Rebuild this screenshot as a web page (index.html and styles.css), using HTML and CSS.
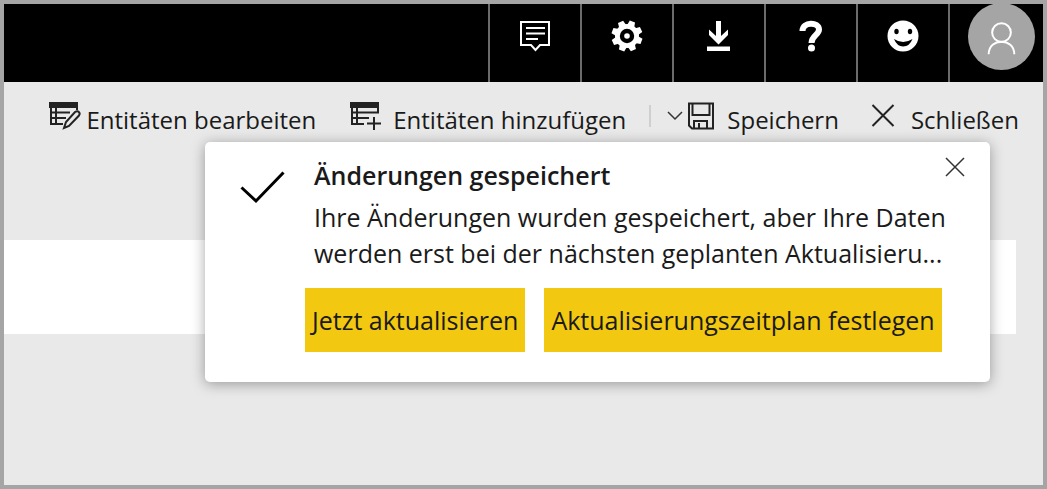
FILE: index.html
```html
<!DOCTYPE html>
<html lang="de">
<head>
<meta charset="utf-8">
<meta name="viewport" content="width=device-width, initial-scale=1">
<title>Entitäten</title>
<link rel="stylesheet" href="styles.css">
</head>
<body>
<div class="app">
  <header class="topbar">
    <button class="topbar-button" type="button" aria-label="Kommentare">
      <svg width="32" height="32" viewBox="0 0 32 32" fill="none" stroke="#fff" stroke-width="2">
        <path d="M2 2H30V25H21L16.500 30L12 25H2Z"/>
        <path d="M7 8H26M7 13.500H26M7 19H19"/>
      </svg>
    </button>
    <button class="topbar-button" type="button" aria-label="Einstellungen">
      <svg width="32" height="32" viewBox="-16 -16 32 32" fill="#fff">
        <g transform="rotate(-2)">
          <g id="teeth">
            <path id="tooth" d="M-3.800-10L-2.800-15.500H2.800L3.800-10L2.800 0H-2.800Z" transform="rotate(22.500)"/>
            <use href="#tooth" transform="rotate(45)"/>
            <use href="#tooth" transform="rotate(90)"/>
            <use href="#tooth" transform="rotate(135)"/>
          </g>
          <use href="#teeth" transform="rotate(180)"/>
        </g>
        <circle r="12"/>
        <circle r="7.200" fill="#000"/>
        <circle r="2.800"/>
      </svg>
    </button>
    <button class="topbar-button" type="button" aria-label="Herunterladen">
      <svg width="32" height="32" viewBox="0 0 32 32" fill="#fff">
        <path d="M13 1H18V16L25 9.500V15L15.500 24.500L6 15V9.500L13 16ZM4 26.500H27V31H4Z"/>
      </svg>
    </button>
    <button class="topbar-button" type="button" aria-label="Hilfe">
      <svg width="32" height="32" viewBox="0 0 32 32" fill="none" stroke="#fff">
        <path d="M7.500 11C7.500 1.500 24 1.500 24 9.500C24 15 16.500 15.500 16.500 23" stroke-width="6"/>
        <circle cx="16.500" cy="28" r="3.500" fill="#fff" stroke="none"/>
      </svg>
    </button>
    <button class="topbar-button" type="button" aria-label="Feedback">
      <svg width="32" height="32" viewBox="0 0 32 32">
        <circle cx="16" cy="16" r="15.500" fill="#fff"/>
        <ellipse cx="9.500" cy="11.500" rx="2.200" ry="2.800"/>
        <ellipse cx="23" cy="11.500" rx="2.200" ry="2.800"/>
        <path d="M7 19Q16 25 25.500 19Q22.500 26.500 16.200 26.500Q10 26.500 7 19Z"/>
      </svg>
    </button>
    <button class="topbar-button topbar-account" type="button" aria-label="Konto">
      <svg width="67" height="67" viewBox="0 0 68 68" fill="none" stroke="#fff" stroke-width="2">
        <circle cx="34" cy="34" r="34" fill="#a5a5a5" stroke="none"/>
        <circle cx="34" cy="30" r="9.500"/>
        <path d="M21 52C21 35 47 35 47 52"/>
      </svg>
    </button>
  </header>

  <nav class="toolbar" aria-label="Entitäten">
    <button class="tool tool-edit" type="button">
      <svg width="32" height="28" viewBox="0 0 32 28" fill="none" stroke="#222" stroke-width="2">
        <path d="M1 1H28V5H1Z" fill="#222"/>
        <path d="M2 2V22H14M7 5V22M2 10.500H21M2 16H17M28 2V8"/>
        <path d="M15 26L17 20L26 10Q29 8 30.500 11Q31 12 30 13.500L20 24Z"/>
      </svg>
      <span>Entitäten bearbeiten</span>
    </button>
    <button class="tool tool-add" type="button">
      <svg width="32" height="28" viewBox="0 0 32 28" fill="none" stroke="#222" stroke-width="2">
        <path d="M1 1H28V5H1Z" fill="#222"/>
        <path d="M2 2V22H14M7 5V22M2 10.500H28V2M2 16H19M24 15V28M17 21.500H31"/>
      </svg>
      <span>Entitäten hinzufügen</span>
    </button>
    <span class="divider"></span>
    <button class="tool tool-save" type="button">
      <svg width="16" height="28" viewBox="0 0 16 28" fill="none" stroke="#333" stroke-width="1.500">
        <path d="M1 10L8 17L15 10"/>
      </svg>
      <svg class="disk" width="28" height="28" viewBox="0 0 28 28" fill="none" stroke="#222" stroke-width="2">
        <path d="M2 1.500H26V26.500H5L2 23.500ZM5.500 2V13H22.500V2M7 26V19H20V26M12 21V26"/>
      </svg>
      <span>Speichern</span>
    </button>
    <button class="tool tool-close" type="button">
      <svg width="24" height="28" viewBox="0 0 24 28" fill="none" stroke="#222" stroke-width="2">
        <path d="M1.500 3L22.500 24M22.500 3L1.500 24"/>
      </svg>
      <span>Schließen</span>
    </button>
  </nav>

  <main class="content">
    <div class="row"></div>
  </main>

  <section class="notice" role="dialog" aria-labelledby="notice-title">
    <svg class="notice-check" width="46" height="34" viewBox="0 0 46 34" fill="none" stroke="#000" stroke-width="3">
      <path d="M1.500 17.500L16 31L43.500 2.500"/>
    </svg>
    <div class="notice-body">
      <h2 class="notice-title" id="notice-title">Änderungen gespeichert</h2>
      <p class="notice-text">Ihre Änderungen wurden gespeichert, aber Ihre Daten werden erst bei der nächsten geplanten Aktualisieru...</p>
      <div class="notice-actions">
        <button class="action" type="button">Jetzt aktualisieren</button>
        <button class="action" type="button">Aktualisierungszeitplan festlegen</button>
      </div>
    </div>
    <button class="notice-close" type="button" aria-label="Meldung schließen">
      <svg width="20" height="20" viewBox="0 0 20 20" fill="none" stroke="#333" stroke-width="1.500">
        <path d="M1 1L19 19M19 1L1 19"/>
      </svg>
    </button>
  </section>
</div>
</body>
</html>
```
FILE: styles.css
```css
* {
  box-sizing: border-box;
}

body {
  margin: 0;
  font-family: "Open Sans", "Noto Sans", sans-serif;
  font-size: 24px;
  color: #1a1a1a;
}

button {
  margin: 0;
  padding: 0;
  border: 0;
  background: none;
  font: inherit;
  color: inherit;
  white-space: nowrap;
  cursor: pointer;
}

svg {
  display: block;
  flex: none;
}

.app {
  position: relative;
  display: flex;
  flex-direction: column;
  min-height: 100vh;
  border: 4px solid #a5a5a5;
  background: #e9e9e9;
}

.topbar {
  display: flex;
  justify-content: flex-end;
  height: 78px;
  overflow: hidden;
  background: #000;
}

.topbar-button {
  display: flex;
  justify-content: center;
  align-items: flex-start;
  width: 92px;
  padding-top: 16px;
  border-left: 2px solid #6b6b6b;
}

.topbar-account {
  justify-content: flex-start;
  width: 95px;
  padding: 0 0 0 18px;
}

.topbar-account svg {
  margin-top: -1px;
}

.toolbar {
  display: flex;
  justify-content: flex-end;
  align-items: center;
  height: 76px;
  padding-right: 24px;
}

.tool {
  display: flex;
  align-items: center;
  line-height: 36px;
}

.tool svg {
  margin-bottom: 8px;
}

.tool-edit {
  gap: 5px;
  margin-right: 34px;
}

.tool-add {
  gap: 11px;
  margin-right: 23px;
}

.divider {
  width: 2px;
  height: 22px;
  margin: 0 16px 8px 0;
  background: #cfcfcf;
}

.tool-save {
  gap: 4px;
  margin-right: 32px;
}

.disk {
  margin-right: 8px;
}

.tool-close {
  gap: 16px;
}

.content {
  flex: 1;
  padding: 82px 27px 0 0;
}

.row {
  height: 94px;
  background: #fff;
}

.notice {
  position: absolute;
  top: 138px;
  left: 201px;
  right: 53px;
  display: flex;
  gap: 19px;
  padding: 15px 40px 30px 35px;
  border-radius: 5px;
  background: #fff;
  box-shadow: 0 2px 14px rgba(0, 0, 0, 0.35);
  font-size: 25px;
}

.notice-check {
  margin-top: 13px;
}

.notice-body {
  flex: 1;
}

.notice-title {
  margin: 0 9px 6px;
  font-size: 25px;
  font-weight: 600;
  line-height: 36px;
}

.notice-text {
  margin: 0 0 17px 9px;
  line-height: 36px;
}

.notice-actions {
  display: flex;
  gap: 19px;
}

.action {
  height: 64px;
  padding: 0 7px;
  background: #f2c811;
}

.notice-close {
  position: absolute;
  top: 15px;
  right: 25px;
}
```
